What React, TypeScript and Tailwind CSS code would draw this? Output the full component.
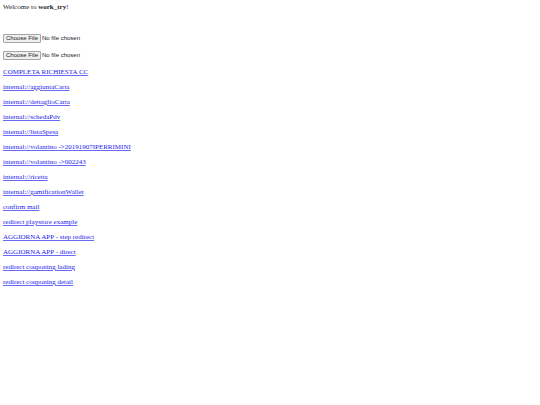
const links = [
  "COMPLETA RICHIESTA CC",
  "internal://aggiuntaCarta",
  "internal://dettaglioCarta",
  "internal://schedaPdv",
  "internal://listaSpesa",
  "internal://volantino ->20191907IPERRIMINI",
  "internal://volantino ->002243",
  "internal://ricetta",
  "internal://gamificationWallet",
  "confirm mail",
  "redirect playstore example",
  "AGGIORNA APP - step redirect",
  "AGGIORNA APP - direct",
  "redirect couponing lading",
  "redirect couponing detail",
];

function FileField({ label }: { label: string }) {
  return (
    <input
      type="file"
      aria-label={label}
      className="block h-[9px] font-['Liberation_Sans',Arial,sans-serif] text-[6px] leading-[7px] text-[#222222] file:mr-px file:h-[9px] file:rounded-[1px] file:border file:border-solid file:border-[#a6a6a6] file:bg-[#efefef] file:px-[2px] file:text-[6px] file:leading-[7px]"
    />
  );
}

export default function App() {
  return (
    <main className="min-h-screen bg-white px-[3px] pt-[3px] font-['Liberation_Serif','Times_New_Roman',serif] text-[7px] leading-[8px] text-[#222222]">
      <p>
        Welcome to <b>work_try</b>!
      </p>

      <div className="mt-[23px] flex flex-col gap-2">
        <FileField label="First file" />
        <FileField label="Second file" />
      </div>

      <nav className="mt-2 flex flex-col items-start gap-[7px]">
        {links.map((link) => (
          <a key={link} href="#" className="text-[#1a1aee] underline decoration-[#6a6af2]">
            {link}
          </a>
        ))}
      </nav>
    </main>
  );
}
